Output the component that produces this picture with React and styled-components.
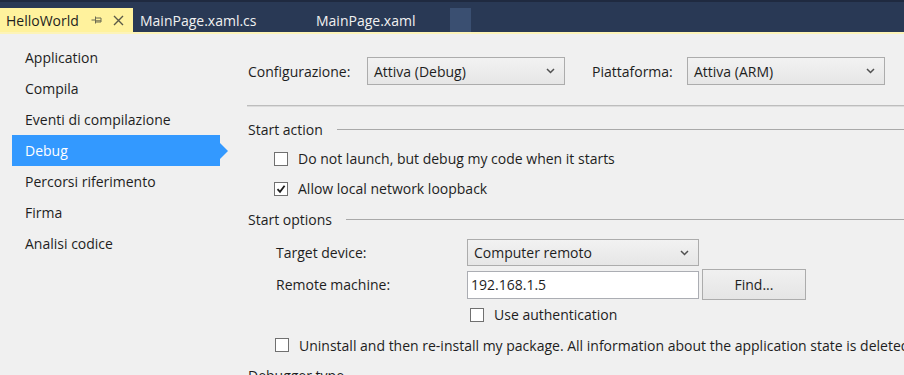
import styled, { createGlobalStyle } from "styled-components"

const GlobalStyle = createGlobalStyle`
    body {
        margin: 0;
        background: #f0f0f0;
        font-family: "Open Sans", "Noto Sans", sans-serif;
        overflow: hidden;
    }
`

const pages = ["Application", "Compila", "Eventi di compilazione", "Debug", "Percorsi riferimento", "Firma", "Analisi codice"]

export default function App() {
    return (
        <Window>
            <GlobalStyle />
            <TabBar>
                <Tab active>
                    <span>HelloWorld</span>
                    <svg width="11" height="8" viewBox="0 0 11 8">
                        <path d="M0.5 4H4M4.5 0.5V7.5M4.5 2H10V6H4.5M4.5 4.8H10" fill="none" stroke="#6b6a52" strokeWidth="1" />
                    </svg>
                    <svg width="11" height="11" viewBox="0 0 11 11">
                        <path d="M1 1L10 10M10 1L1 10" stroke="#5b5a48" strokeWidth="1.4" />
                    </svg>
                </Tab>
                <Tab width={170}>MainPage.xaml.cs</Tab>
                <Tab width={147} pad={13}>MainPage.xaml</Tab>
                <TabEdge />
            </TabBar>
            <Accent />
            <Body>
                <Sidebar>
                    {pages.map(p => (
                        <NavItem key={p} selected={p === "Debug"}>{p}</NavItem>
                    ))}
                </Sidebar>
                <Content>
                    <FieldRow>
                        <FieldLabel width={119}>Configurazione:</FieldLabel>
                        <Select width={198}>Attiva (Debug)<Chevron /></Select>
                        <FieldLabel width={95} style={{ marginLeft: 27 }}>Piattaforma:</FieldLabel>
                        <Select width={198}>Attiva (ARM)<Chevron /></Select>
                    </FieldRow>
                    <Separator />
                    <Section height={30} top={7}>Start action</Section>
                    <CheckRow height={29} indent={27}>
                        <Check />Do not launch, but debug my code when it starts
                    </CheckRow>
                    <CheckRow height={31} indent={27}>
                        <Check checked />Allow local network loopback
                    </CheckRow>
                    <Section height={31}>Start options</Section>
                    <FieldRow top={4} indent={28}>
                        <FieldLabel width={191}>Target device:</FieldLabel>
                        <Select width={232} height={27}>Computer remoto<Chevron /></Select>
                    </FieldRow>
                    <FieldRow top={3} indent={28}>
                        <FieldLabel width={191}>Remote machine:</FieldLabel>
                        <TextInput>192.168.1.5</TextInput>
                        <Button>Find...</Button>
                    </FieldRow>
                    <CheckRow height={29} indent={223}>
                        <Check />Use authentication
                    </CheckRow>
                    <CheckRow height={32} indent={28}>
                        <Check />Uninstall and then re-install my package. All information about the application state is deleted.
                    </CheckRow>
                    <Section height={28}>Debugger type</Section>
                </Content>
            </Body>
        </Window>
    )
}

function Chevron() {
    return (
        <svg width="9" height="6" viewBox="0 0 9 6" style={{ marginLeft: "auto" }}>
            <path d="M1 1L4.5 4.5L8 1" fill="none" stroke="#505050" strokeWidth="1.5" />
        </svg>
    )
}

function Check({ checked }) {
    return (
        <Box>
            {checked && (
                <svg width="10" height="10" viewBox="0 0 10 10">
                    <path d="M1.5 5.2L4 7.8L8.6 1.8" fill="none" stroke="#1c1c1c" strokeWidth="1.8" />
                </svg>
            )}
        </Box>
    )
}

const Window = styled.div`
    width: 904px;
    height: 375px;
    overflow: hidden;
    display: flex;
    flex-direction: column;
    color: #1e1e1e;
    font-size: 14px;
`

const TabBar = styled.div`
    height: 32px;
    box-sizing: border-box;
    background: #293955;
    border-top: 2px solid #1f2a40;
    display: flex;
    align-items: flex-end;
    flex-shrink: 0;
`

const Tab = styled.div`
    height: 24px;
    box-sizing: border-box;
    display: flex;
    align-items: center;
    padding-left: ${p => p.active ? 6 : (p.pad || 7)}px;
    width: ${p => p.active ? 133 : p.width}px;
    background: ${p => p.active ? "#fff29d" : "transparent"};
    color: ${p => p.active ? "#1e1e1e" : "#f1f1f1"};
    font-size: 14px;
    white-space: nowrap;
    svg:first-of-type {
        margin-left: 12px;
    }
    svg:last-of-type {
        margin-left: 11px;
    }
`

const TabEdge = styled.div`
    width: 21px;
    height: 24px;
    background: #3a4f71;
`

const Accent = styled.div`
    height: 2px;
    background: #fdf4b8;
    flex-shrink: 0;
`

const Body = styled.div`
    display: flex;
    flex: 1;
`

const Sidebar = styled.div`
    width: 236px;
    padding-top: 8px;
    flex-shrink: 0;
`

const NavItem = styled.div`
    position: relative;
    height: 31px;
    width: 208px;
    margin-left: 12px;
    padding-left: 13px;
    box-sizing: border-box;
    display: flex;
    align-items: center;
    background: ${p => p.selected ? "#3399ff" : "transparent"};
    color: ${p => p.selected ? "#ffffff" : "#1e1e1e"};
    &::after {
        content: "";
        display: ${p => p.selected ? "block" : "none"};
        position: absolute;
        right: -8px;
        top: 8px;
        border-top: 8px solid transparent;
        border-bottom: 8px solid transparent;
        border-left: 8px solid #3399ff;
    }
`

const Content = styled.div`
    flex: 1;
    min-width: 0;
    padding-left: 11px;
    padding-top: 23px;
    display: flex;
    flex-direction: column;
    white-space: nowrap;
    overflow: hidden;
`

const FieldRow = styled.div`
    display: flex;
    align-items: center;
    margin-top: ${p => p.top || 0}px;
    padding-left: ${p => (p.indent || 0) + 1}px;
`

const FieldLabel = styled.div`
    width: ${p => p.width}px;
    flex-shrink: 0;
`

const Select = styled.div`
    width: ${p => p.width}px;
    height: ${p => p.height || 28}px;
    box-sizing: border-box;
    border: 1px solid #acacac;
    background: linear-gradient(#f2f2f2, #e6e6e6);
    display: flex;
    align-items: center;
    padding: 0 9px 0 6px;
    flex-shrink: 0;
`

const TextInput = styled.div`
    width: 232px;
    height: 28px;
    box-sizing: border-box;
    border: 1px solid #abadb3;
    background: #ffffff;
    display: flex;
    align-items: center;
    padding-left: 3px;
    flex-shrink: 0;
`

const Button = styled.div`
    width: 104px;
    height: 31px;
    margin-left: 3px;
    box-sizing: border-box;
    border: 1px solid #acacac;
    background: linear-gradient(#f0f0f0, #e5e5e5);
    display: flex;
    align-items: center;
    justify-content: center;
    flex-shrink: 0;
`

const Separator = styled.div`
    margin-top: 20px;
    height: 1px;
    background: #bdbdbd;
    border-bottom: 1px solid #dcdcdc;
`

const Section = styled.div`
    height: ${p => p.height}px;
    margin-top: ${p => p.top || 0}px;
    display: flex;
    align-items: center;
    padding-left: 1px;
    flex-shrink: 0;
    &::after {
        content: "";
        flex: 1;
        height: 1px;
        margin-left: 14px;
        background: #a9a9a9;
    }
`

const CheckRow = styled.div`
    height: ${p => p.height}px;
    display: flex;
    align-items: center;
    padding-left: ${p => p.indent}px;
    flex-shrink: 0;
`

const Box = styled.div`
    width: 14px;
    height: 14px;
    box-sizing: border-box;
    border: 1px solid #707070;
    background: #ffffff;
    margin-right: 10px;
    display: flex;
    align-items: center;
    justify-content: center;
    flex-shrink: 0;
`
